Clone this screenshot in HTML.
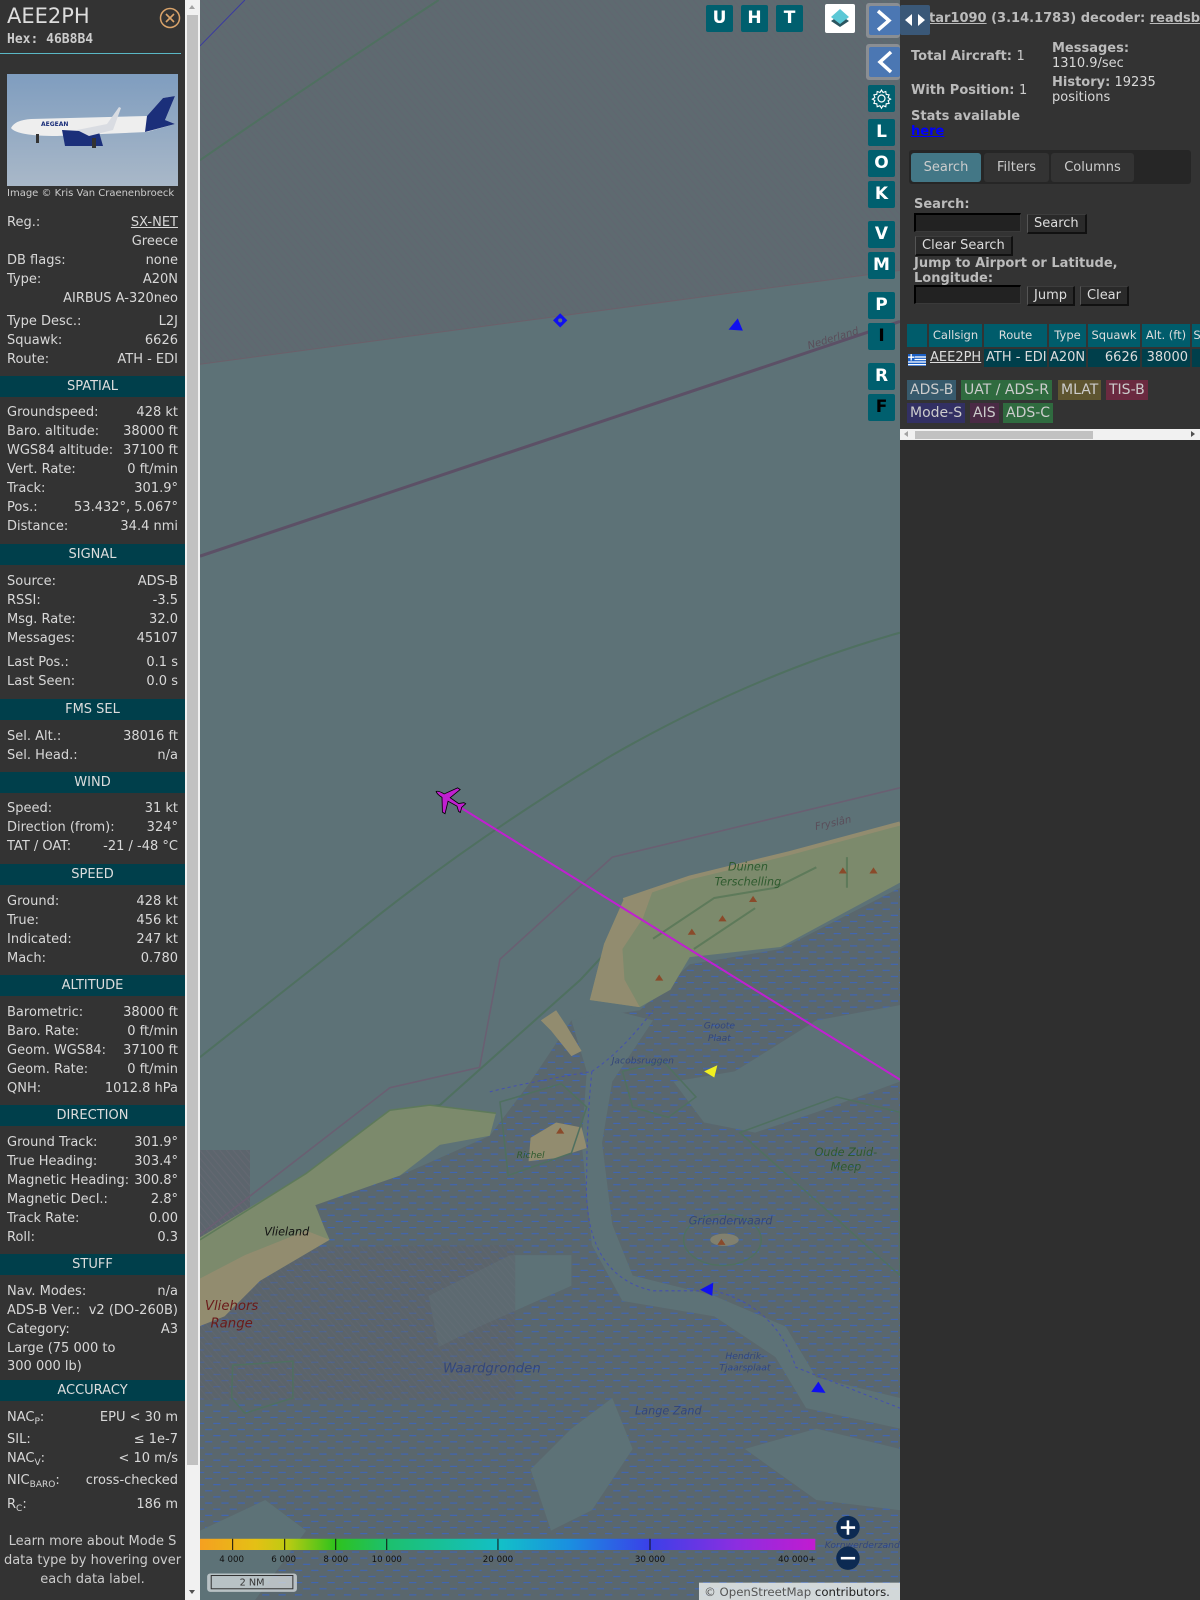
<!DOCTYPE html>
<html><head><meta charset="utf-8"><style>
*{box-sizing:border-box;margin:0;padding:0}
body{width:1200px;height:1600px;overflow:hidden;background:#333;font-family:"DejaVu Sans","Liberation Sans",sans-serif;color:#d8d8d8;position:relative}
#left{position:absolute;left:0;top:0;width:185px;height:1600px;background:#333}
.r{position:absolute;left:7px;width:171px;height:20px;line-height:20px;font-size:13px;white-space:nowrap}
.r .v{position:absolute;right:0;top:0}
.h{position:absolute;left:0;width:185px;height:21px;line-height:21px;background:#003f4b;text-align:center;font-size:13px;color:#ddd}
sub{font-size:9px;vertical-align:-3px}
#sb{position:absolute;left:185px;top:0;width:15px;height:1600px;background:#f1f1f1}
#map{position:absolute;left:200px;top:0;width:700px;height:1600px}
.mb{position:absolute;width:27px;height:27px;background:#005f6e;border-radius:2px;color:#fff;font-weight:bold;font-size:17px;text-align:center;line-height:27px;font-family:"DejaVu Sans",sans-serif}
#right{position:absolute;left:900px;top:0;width:300px;height:1600px;background:#2f2f2f}
.a{position:absolute;font-size:13px;white-space:nowrap}
.b{font-weight:bold;color:#bbb}
.btn{position:absolute;background:#2a2a2a;border:1px solid #555;border-right:2px solid #111;border-bottom:2px solid #111;border-top:1px solid #3d3d3d;color:#ddd;font-size:13px;line-height:17px;padding:0 6px}
.inp{position:absolute;background:#222;border-top:2px solid #000;border-left:2px solid #000;border-right:1px solid #3a3a3a;border-bottom:1px solid #3a3a3a}
.th{position:absolute;top:324px;height:23px;background:#005c6b;color:#ddd;font-size:11.5px;line-height:23px;text-align:center}
.td{position:absolute;top:349px;height:18px;background:#003f4b;color:#ddd;font-size:13px;line-height:18px}
.bd{position:absolute;height:20px;line-height:20px;font-size:14px;padding:0 3px;color:#ccc}
</style></head><body>
<div id="left">
<div style="position:absolute;left:7px;top:4px;font-size:21px;color:#ddd">AEE2PH</div>
<svg style="position:absolute;left:159px;top:7px" width="22" height="22"><circle cx="11" cy="11" r="9.5" fill="none" stroke="#d9a36a" stroke-width="1.5"/><path d="M7 7L15 15M15 7L7 15" stroke="#d9a36a" stroke-width="1.6"/></svg>
<div style="position:absolute;left:7px;top:32px;font-size:13px;font-weight:bold;font-family:'DejaVu Sans Mono',monospace;color:#ccc">Hex: 46B8B4</div>
<div style="position:absolute;left:0;top:53px;width:181px;height:1px;background:#5ab8c6"></div>
<svg style="position:absolute;left:7px;top:74px" width="171" height="112">
<defs><linearGradient id="sky" x1="0" y1="0" x2="0" y2="1"><stop offset="0" stop-color="#7f9dbf"/><stop offset="1" stop-color="#a9b8c8"/></linearGradient></defs>
<rect width="171" height="112" fill="url(#sky)"/>
<path d="M4 54 Q8 46 24 45 L140 42 L156 24 L168 22 L158 46 L168 50 L140 58 L50 62 Q10 62 4 54Z" fill="#eee"/>
<path d="M138 58 L140 42 L156 24 L168 22 L158 46 L168 50 Z" fill="#1b2f7a"/>
<path d="M55 56 L92 58 L96 72 L58 72 Z" fill="#1b2f7a"/><path d="M70 56 L100 50 L112 33 L114 34 L106 56 L82 62Z" fill="#d9dce2"/>
<rect x="85" y="64" width="4" height="10" fill="#333"/><rect x="29" y="60" width="3" height="9" fill="#333"/>
<text x="34" y="52" font-size="6" fill="#1b2f7a" font-weight="bold">AEGEAN</text>
</svg>
<div style="position:absolute;left:7px;top:188px;font-size:10px;color:#ccc;white-space:nowrap">Image © Kris Van Craenenbroeck</div>
<div class="r" style="top:213px">Reg.:<span class="v" style="text-decoration:underline">SX-NET</span></div>
<div class="r" style="top:232px"><span class="v">Greece</span></div>
<div class="r" style="top:251px">DB flags:<span class="v">none</span></div>
<div class="r" style="top:270px">Type:<span class="v">A20N</span></div>
<div class="r" style="top:289px"><span class="v">AIRBUS A-320neo</span></div>
<div class="r" style="top:312px">Type Desc.:<span class="v">L2J</span></div>
<div class="r" style="top:331px">Squawk:<span class="v">6626</span></div>
<div class="r" style="top:350px">Route:<span class="v">ATH - EDI</span></div>
<div class="h" style="top:376px">SPATIAL</div>
<div class="r" style="top:403px">Groundspeed:<span class="v">428 kt</span></div>
<div class="r" style="top:422px">Baro. altitude:<span class="v">38000 ft</span></div>
<div class="r" style="top:441px">WGS84 altitude:<span class="v">37100 ft</span></div>
<div class="r" style="top:460px">Vert. Rate:<span class="v">0 ft/min</span></div>
<div class="r" style="top:479px">Track:<span class="v">301.9°</span></div>
<div class="r" style="top:498px">Pos.:<span class="v">53.432°, 5.067°</span></div>
<div class="r" style="top:517px">Distance:<span class="v">34.4 nmi</span></div>
<div class="h" style="top:544px">SIGNAL</div>
<div class="r" style="top:572px">Source:<span class="v">ADS-B</span></div>
<div class="r" style="top:591px">RSSI:<span class="v">-3.5</span></div>
<div class="r" style="top:610px">Msg. Rate:<span class="v">32.0</span></div>
<div class="r" style="top:629px">Messages:<span class="v">45107</span></div>
<div class="r" style="top:653px">Last Pos.:<span class="v">0.1 s</span></div>
<div class="r" style="top:672px">Last Seen:<span class="v">0.0 s</span></div>
<div class="h" style="top:699px">FMS SEL</div>
<div class="r" style="top:727px">Sel. Alt.:<span class="v">38016 ft</span></div>
<div class="r" style="top:746px">Sel. Head.:<span class="v">n/a</span></div>
<div class="h" style="top:772px">WIND</div>
<div class="r" style="top:799px">Speed:<span class="v">31 kt</span></div>
<div class="r" style="top:818px">Direction (from):<span class="v">324°</span></div>
<div class="r" style="top:837px">TAT / OAT:<span class="v">-21 / -48 °C</span></div>
<div class="h" style="top:864px">SPEED</div>
<div class="r" style="top:892px">Ground:<span class="v">428 kt</span></div>
<div class="r" style="top:911px">True:<span class="v">456 kt</span></div>
<div class="r" style="top:930px">Indicated:<span class="v">247 kt</span></div>
<div class="r" style="top:949px">Mach:<span class="v">0.780</span></div>
<div class="h" style="top:975px">ALTITUDE</div>
<div class="r" style="top:1003px">Barometric:<span class="v">38000 ft</span></div>
<div class="r" style="top:1022px">Baro. Rate:<span class="v">0 ft/min</span></div>
<div class="r" style="top:1041px">Geom. WGS84:<span class="v">37100 ft</span></div>
<div class="r" style="top:1060px">Geom. Rate:<span class="v">0 ft/min</span></div>
<div class="r" style="top:1079px">QNH:<span class="v">1012.8 hPa</span></div>
<div class="h" style="top:1105px">DIRECTION</div>
<div class="r" style="top:1133px">Ground Track:<span class="v">301.9°</span></div>
<div class="r" style="top:1152px">True Heading:<span class="v">303.4°</span></div>
<div class="r" style="top:1171px">Magnetic Heading:<span class="v">300.8°</span></div>
<div class="r" style="top:1190px">Magnetic Decl.:<span class="v">2.8°</span></div>
<div class="r" style="top:1209px">Track Rate:<span class="v">0.00</span></div>
<div class="r" style="top:1228px">Roll:<span class="v">0.3</span></div>
<div class="h" style="top:1254px">STUFF</div>
<div class="r" style="top:1282px">Nav. Modes:<span class="v">n/a</span></div>
<div class="r" style="top:1301px">ADS-B Ver.:<span class="v">v2 (DO-260B)</span></div>
<div class="r" style="top:1320px">Category:<span class="v">A3</span></div>
<div class="r" style="top:1339px">Large (75 000 to</div>
<div class="r" style="top:1357px">300 000 lb)</div>
<div class="h" style="top:1380px">ACCURACY</div>
<div class="r" style="top:1408px">NAC<sub>P</sub>:<span class="v">EPU &lt; 30 m</span></div>
<div class="r" style="top:1430px">SIL:<span class="v">≤ 1e-7</span></div>
<div class="r" style="top:1449px">NAC<sub>V</sub>:<span class="v">&lt; 10 m/s</span></div>
<div class="r" style="top:1471px">NIC<sub>BARO</sub>:<span class="v">cross-checked</span></div>
<div class="r" style="top:1495px">R<sub>C</sub>:<span class="v">186 m</span></div>
<div style="position:absolute;left:0;top:1532px;width:185px;text-align:center;font-size:13px;line-height:19px;color:#ccc">Learn more about Mode S data type by hovering over each data label.</div>
</div>
<div id="sb"><div style="position:absolute;left:2px;top:15px;width:11px;height:1450px;background:#c1c1c1"></div>
<div style="position:absolute;left:4px;top:5px;width:0;height:0;border:3.5px solid transparent;border-bottom:4px solid #a3a3a3;border-top:0"></div>
<div style="position:absolute;left:4px;top:1590px;width:0;height:0;border:3.5px solid transparent;border-top:4px solid #505050;border-bottom:0"></div></div>

<svg id="map" viewBox="196 0 686 1568" preserveAspectRatio="none">
<defs>
<pattern id="hat" width="5" height="5" patternUnits="userSpaceOnUse" patternTransform="rotate(-40)"><rect width="5" height="5" fill="#5e6a70"/><line x1="0" y1="0" x2="0" y2="5" stroke="#616670" stroke-width="2"/></pattern>
<pattern id="hat2" width="5" height="5" patternUnits="userSpaceOnUse" patternTransform="rotate(-40)"><rect width="5" height="5" fill="#5c6069"/><line x1="0" y1="0" x2="0" y2="5" stroke="#666570" stroke-width="2"/></pattern>
<pattern id="flat" width="16" height="12" patternUnits="userSpaceOnUse"><rect width="16" height="12" fill="#5a676d"/><line x1="1" y1="3" x2="8" y2="3" stroke="#3c66be" stroke-width="1"/><line x1="9" y1="9" x2="16" y2="9" stroke="#3c66be" stroke-width="1"/></pattern>
<linearGradient id="cb" x1="0" x2="1"><stop offset="0" stop-color="#f5a020"/><stop offset=".09" stop-color="#e4c015"/><stop offset=".14" stop-color="#bfcb12"/><stop offset=".22" stop-color="#2ec21c"/><stop offset=".3" stop-color="#1dc06a"/><stop offset=".49" stop-color="#13bfc8"/><stop offset=".6" stop-color="#1a8fe0"/><stop offset=".73" stop-color="#3a40e8"/><stop offset=".87" stop-color="#8b2ee0"/><stop offset="1" stop-color="#c21bd0"/></linearGradient>
</defs>
<rect x="196" y="0" width="686" height="1568" fill="#5d7277"/>
<polygon points="196,0 882,0 882,265 196,357" fill="url(#hat)"/>
<line x1="196" y1="357" x2="882" y2="265" stroke="#6b606a" stroke-width="1"/>
<path d="M196,45 L240,0" stroke="#3a3aa0" stroke-width="1"/>
<polygon points="196,1300 255,1255 309,1181 392,1152 480,1113 520,1060 560,1000 627,990 676,945 765,930 882,870 882,1568 196,1568" fill="url(#flat)"/>
<g fill="#5d7277">
<polygon points="560,1000 600,990 640,1000 600,1060 590,1120 600,1200 620,1250 700,1270 770,1300 800,1350 882,1370 882,1400 790,1380 760,1330 700,1290 610,1275 580,1220 570,1120 575,1050"/>
<polygon points="660,1060 720,1050 800,1000 882,985 882,1060 800,1090 740,1110 690,1100"/>
<polygon points="420,1270 500,1230 560,1230 560,1260 470,1300 430,1320"/>
<polygon points="520,1440 560,1400 600,1370 620,1420 580,1480 540,1500"/>
<polygon points="730,1420 800,1400 882,1420 882,1480 800,1470"/>
<polygon points="196,1500 260,1470 300,1500 250,1568 196,1568"/>
</g>
<path d="M580,1050 Q575,1100 575,1150 Q570,1250 640,1265 L700,1265" fill="none" stroke="#4450b0" stroke-width="1" stroke-dasharray="3,3"/>
<path d="M480,1070 Q520,1060 580,1050 Q610,1030 640,990" fill="none" stroke="#4450b0" stroke-width="1" stroke-dasharray="3,3"/>
<path d="M700,1265 Q760,1280 780,1340 L882,1380" fill="none" stroke="#4450b0" stroke-width="1" stroke-dasharray="3,3"/>
<polygon points="192,1127 245,1127 245,1230 192,1230" fill="url(#hat2)" opacity=".75"/>
<polygon points="304,1222 505,1220 505,1372 196,1372 196,1300 255,1255" fill="url(#hat2)" opacity=".45"/>
<path d="M196,545 L882,315" stroke="#5c5066" stroke-width="3"/>
<path d="M196,157 Q300,85 430,0" stroke="#4f7060" stroke-width="2" fill="none"/>
<path d="M196,1036 L329,931 Q450,830 600,740 Q740,660 882,620" stroke="#4f7060" stroke-width="2" fill="none"/>
<path d="M380,1090 L431,1083 L569,960 L620,905" stroke="#4f7060" stroke-width="2" fill="none"/>
<path d="M196,1210 L382,1066 L470,1046 L490,940 L600,840 L882,772" stroke="#6a5f72" stroke-width="1.5" fill="none"/>
<polygon points="578,980 592,925 611,882 676,860 774,836 882,807 882,865 765,928 676,938 657,970 627,987" fill="#7c8a6c"/>
<polygon points="578,980 592,925 611,882 640,872 630,900 610,930 612,960 627,987" fill="#928c6f"/>
<path d="M611,882 L676,860 L774,836 L882,807" stroke="#928c6f" stroke-width="4" fill="none"/>
<path d="M640,920 L700,880 L760,870 L800,850 M680,930 L740,890 M830,840 L830,870" stroke="#5e7a5a" stroke-width="2" fill="none"/>
<polygon points="530,1000 545,990 555,1005 570,1030 560,1035 540,1010" fill="#928c6f"/>
<polygon points="192,1215 300,1150 382,1088 421,1083 486,1091 480,1113 431,1122 392,1152 309,1181 319,1206 323,1215 255,1255 192,1301" fill="#7c8a6c"/>
<polygon points="192,1255 240,1230 300,1206 323,1215 255,1255 220,1290 192,1301" fill="#928c6f"/>
<path d="M196,1215 L300,1150 L382,1088 L421,1083 L486,1091" stroke="#5e7a5a" stroke-width="1.5" fill="none"/>
<polygon points="520,1115 545,1100 570,1105 575,1125 545,1135 518,1138" fill="#928c6f"/>
<polygon points="490,1080 550,1062 575,1085 560,1130 498,1152" fill="none" stroke="#4f7060" stroke-width="1.5"/>
<polygon points="610,1050 650,1040 682,1075 655,1095 620,1085" fill="none" stroke="#4f7060" stroke-width="1.5"/>
<polygon points="725,1110 820,1075 882,1090 882,1250" fill="none" stroke="#4f7060" stroke-width="1.5"/>
<polygon points="228,1338 287,1334 287,1370 240,1385 227,1370" fill="none" stroke="#4f7060" stroke-width="1.5"/>
<ellipse cx="708" cy="1215" rx="38" ry="25" fill="none" stroke="#4f7060" stroke-width="1.5"/>
<ellipse cx="710" cy="1215" rx="14" ry="6" fill="#928c6f" opacity=".7"/>
<g fill="#8a4a2a"><polygon points="707,1214 711,1220 703,1220"/><polygon points="549,1105 553,1111 545,1111"/><polygon points="646,955 650,961 642,961"/><polygon points="678,910 682,916 674,916"/><polygon points="708,897 712,903 704,903"/><polygon points="738,878 742,884 734,884"/><polygon points="826,850 830,856 822,856"/><polygon points="856,850 860,856 852,856"/></g>
<path d="M441,785 L882,1058" stroke="#c020d0" stroke-width="2"/>
<g transform="translate(441,784) rotate(-58)" fill="#c020d0" stroke="#000" stroke-width=".8"><path d="M0,-16 Q2,-14 2,-8 L14,0 L14,3 L2,-1 L1.5,9 L5,13 L5,15 L0,13.5 L-5,15 L-5,13 L-1.5,9 L-2,-1 L-14,3 L-14,0 L-2,-8 Q-2,-14 0,-16Z"/></g>
<polygon points="549,307 556,314 549,321 542,314" fill="#1010f0"/><circle cx="549" cy="314" r="2" fill="#5e7479"/>
<polygon points="714,323 728,324 723,312" fill="#1010f0"/>
<polygon points="690,1050 703,1044 700,1056" fill="#f0f020"/>
<polygon points="686,1264 699,1257 698,1270" fill="#1010f0"/>
<polygon points="795,1364 809,1365 802,1354" fill="#1010f0"/>
<g font-family="DejaVu Sans,sans-serif" font-style="italic">
<text x="790" y="335" font-size="10" fill="#5a4e5a" transform="rotate(-17 815 330)">Nederland</text>
<text x="798" y="810" font-size="10" fill="#5a4e5a" transform="rotate(-12 815 805)">Fryslân</text>
<text x="733" y="853" font-size="11" fill="#2e5a2e" text-anchor="middle">Duinen</text>
<text x="733" y="868" font-size="11" fill="#2e5a2e" text-anchor="middle">Terschelling</text>
<text x="705" y="1008" font-size="9" fill="#33467a" text-anchor="middle">Groote</text>
<text x="705" y="1020" font-size="9" fill="#33467a" text-anchor="middle">Plaat</text>
<text x="630" y="1042" font-size="9" fill="#33467a" text-anchor="middle">Jacobsruggen</text>
<text x="520" y="1135" font-size="9" fill="#2e5a2e" text-anchor="middle">Richel</text>
<text x="829" y="1133" font-size="11" fill="#2e5a2e" text-anchor="middle">Oude Zuid-</text>
<text x="829" y="1147" font-size="11" fill="#2e5a2e" text-anchor="middle">Meep</text>
<text x="716" y="1200" font-size="11" fill="#33467a" text-anchor="middle">Grienderwaard</text>
<text x="281" y="1211" font-size="11" fill="#111" text-anchor="middle">Vlieland</text>
<text x="227" y="1284" font-size="13" fill="#6a1a1a" text-anchor="middle">Vliehors</text>
<text x="227" y="1301" font-size="13" fill="#6a1a1a" text-anchor="middle">Range</text>
<text x="482" y="1345" font-size="13" fill="#33467a" text-anchor="middle">Waardgronden</text>
<text x="655" y="1386" font-size="11" fill="#33467a" text-anchor="middle">Lange Zand</text>
<text x="730" y="1332" font-size="9" fill="#33467a" text-anchor="middle">Hendrik-</text>
<text x="730" y="1343" font-size="9" fill="#33467a" text-anchor="middle">Tjaarsplaat</text>
<text x="845" y="1517" font-size="9" fill="#33467a" text-anchor="middle">Kornwerderzand</text>
</g>
<rect x="196" y="1508" width="603" height="11" fill="url(#cb)"/>
<g stroke="#111" stroke-width="1"><line x1="228" y1="1508" x2="228" y2="1519"/><line x1="279" y1="1508" x2="279" y2="1519"/><line x1="329" y1="1508" x2="329" y2="1519"/><line x1="379" y1="1508" x2="379" y2="1519"/><line x1="488" y1="1508" x2="488" y2="1519"/><line x1="637" y1="1508" x2="637" y2="1519"/></g>
<g font-family="DejaVu Sans,sans-serif" font-size="8.5" fill="#111" text-anchor="middle"><text x="227" y="1531">4 000</text><text x="278" y="1531">6 000</text><text x="329" y="1531">8 000</text><text x="379" y="1531">10 000</text><text x="488" y="1531">20 000</text><text x="637" y="1531">30 000</text><text x="781" y="1531">40 000+</text></g>
<circle cx="831" cy="1497" r="11.5" fill="#0c2a52"/><path d="M831,1490V1504M824,1497H838" stroke="#fff" stroke-width="2.5"/>
<circle cx="831" cy="1527" r="11.5" fill="#0c2a52"/><path d="M824,1527H838" stroke="#fff" stroke-width="2.5"/>
<rect x="203" y="1542" width="88" height="18" rx="3" fill="#cfd6d8" opacity=".8"/>
<rect x="207" y="1544" width="80" height="13" fill="none" stroke="#333" stroke-width="1"/>
<text x="247" y="1554" font-family="DejaVu Sans,sans-serif" font-size="9.5" fill="#333" text-anchor="middle">2 NM</text>
<rect x="685" y="1551" width="197" height="17" fill="#e8ecec" opacity=".85"/>
<text x="690" y="1564" font-family="DejaVu Sans,sans-serif" font-size="11.5" fill="#555">© <tspan fill="#555">OpenStreetMap</tspan> <tspan fill="#222">contributors.</tspan></text>
</svg>

<div class="mb" style="left:706px;top:5px">U</div>
<div class="mb" style="left:741px;top:5px">H</div>
<div class="mb" style="left:776px;top:5px">T</div>
<div style="position:absolute;left:825px;top:4px;width:30px;height:29px;background:#fff;border-radius:2px"><svg width="30" height="29"><path d="M6,17 L15,23 L24,17 L15,11Z" fill="#2a5560"/><path d="M6,13 L15,5 L24,13 L15,20Z" fill="#5cc8d6"/></svg></div>
<div style="position:absolute;left:866px;top:3px;width:34px;height:35px;background:#8a8e93;border-radius:3px"><div style="position:absolute;left:3px;top:3px;width:31px;height:29px;background:#4b77b3;border-radius:2px"><svg width="31" height="29"><path d="M9,5 L20,14.5 L9,24" fill="none" stroke="#fff" stroke-width="3.5"/></svg></div></div>
<div style="position:absolute;left:866px;top:44px;width:34px;height:36px;background:#8a8e93;border-radius:3px"><div style="position:absolute;left:3px;top:3px;width:31px;height:30px;background:#4b77b3;border-radius:2px"><svg width="31" height="30"><path d="M22,5 L11,15 L22,25" fill="none" stroke="#fff" stroke-width="3.5"/></svg></div></div>
<div class="mb" style="left:868px;top:85px"><svg width="27" height="27"><circle cx="13.5" cy="13.5" r="3.5" fill="none" stroke="#fff" stroke-width="1.2"/><path d="M13.5,5 l1.5,2.5 2.8,-1 .4,2.9 2.9,.4 -1,2.8 2.5,1.5 -2.5,1.5 1,2.8 -2.9,.4 -.4,2.9 -2.8,-1 -1.5,2.5 -1.5,-2.5 -2.8,1 -.4,-2.9 -2.9,-.4 1,-2.8 -2.5,-1.5 2.5,-1.5 -1,-2.8 2.9,-.4 .4,-2.9 2.8,1z" fill="none" stroke="#fff" stroke-width="1.1"/></svg></div>
<div class="mb" style="left:868px;top:119px">L</div>
<div class="mb" style="left:868px;top:150px">O</div>
<div class="mb" style="left:868px;top:181px">K</div>
<div class="mb" style="left:868px;top:221px">V</div>
<div class="mb" style="left:868px;top:252px">M</div>
<div class="mb" style="left:868px;top:292px">P</div>
<div class="mb" style="left:868px;top:323px;color:#000">I</div>
<div class="mb" style="left:868px;top:363px">R</div>
<div class="mb" style="left:868px;top:394px;color:#000">F</div>

<div id="right">
<div style="position:absolute;left:0;top:0;width:300px;height:440px;background:#333"></div>
<div class="a b" style="left:29px;top:11px;font-size:13px;color:#bbb"><span style="text-decoration:underline">tar1090</span> (3.14.1783) decoder: <span style="text-decoration:underline">readsb</span></div>
<div style="position:absolute;left:0;top:5px;width:30px;height:30px;background:#3a5878;border-radius:2px"><svg width="30" height="30"><path d="M5,15 L12,9 L12,21Z M25,15 L18,9 L18,21Z" fill="#fff"/></svg></div>
<div class="a b" style="left:11px;top:49px">Total Aircraft: <span style="font-weight:normal;color:#ccc">1</span></div>
<div class="a b" style="left:11px;top:83px">With Position: <span style="font-weight:normal;color:#ccc">1</span></div>
<div class="a" style="left:152px;top:41px;line-height:15px"><span class="b">Messages:</span><br>1310.9/sec</div>
<div class="a" style="left:152px;top:75px;line-height:15px"><span class="b">History:</span> 19235<br>positions</div>
<div class="a b" style="left:11px;top:109px;line-height:15px">Stats available<br><span style="color:#00f;text-decoration:underline">here</span></div>
<div style="position:absolute;left:9px;top:150px;width:282px;height:34px;background:#262626;border-radius:3px"></div>
<div style="position:absolute;left:11px;top:153px;width:70px;height:29px;background:#437786;border-radius:3px;color:#ccc;font-size:13px;text-align:center;line-height:29px">Search</div>
<div style="position:absolute;left:84px;top:153px;width:65px;height:29px;background:#333;border-radius:3px;color:#ccc;font-size:13px;text-align:center;line-height:29px">Filters</div>
<div style="position:absolute;left:151px;top:153px;width:83px;height:29px;background:#333;border-radius:3px;color:#ccc;font-size:13px;text-align:center;line-height:29px">Columns</div>
<div class="a b" style="left:14px;top:197px">Search:</div>
<div class="inp" style="left:14px;top:213px;width:107px;height:19px"></div>
<div class="btn" style="left:127px;top:214px">Search</div>
<div class="btn" style="left:15px;top:236px">Clear Search</div>
<div class="a b" style="left:14px;top:256px;line-height:15px">Jump to Airport or Latitude,<br>Longitude:</div>
<div class="inp" style="left:14px;top:285px;width:107px;height:19px"></div>
<div class="btn" style="left:127px;top:286px">Jump</div>
<div class="btn" style="left:180px;top:286px">Clear</div>
<div class="th" style="left:7px;width:20px"></div>
<div class="th" style="left:29px;width:53px">Callsign</div>
<div class="th" style="left:84px;width:63px">Route</div>
<div class="th" style="left:149px;width:37px">Type</div>
<div class="th" style="left:188px;width:52px">Squawk</div>
<div class="th" style="left:242px;width:48px">Alt. (ft)</div>
<div class="th" style="left:292px;width:10px">S</div>
<div style="position:absolute;left:8px;top:351px"><svg width="18" height="12"><rect width="18" height="12" fill="#1b5fc4"/><g stroke="#fff" stroke-width="1.3"><line x1="0" y1="5.5" x2="18" y2="5.5"/><line x1="0" y1="8" x2="18" y2="8"/><line x1="0" y1="10.6" x2="18" y2="10.6"/><line x1="7" y1="3" x2="18" y2="3"/></g><rect x="0" y="0" width="6.5" height="6.5" fill="#1b5fc4"/><path d="M3.2,0V6.5M0,3.2H6.5" stroke="#fff" stroke-width="1.3"/></svg></div>
<div class="td" style="left:29px;width:53px;background:#333;text-decoration:underline;padding-left:1px">AEE2PH</div>
<div class="td" style="left:84px;width:63px;padding-left:2px">ATH - EDI</div>
<div class="td" style="left:149px;width:37px;padding-left:1px">A20N</div>
<div class="td" style="left:188px;width:52px;text-align:right;padding-right:2px">6626</div>
<div class="td" style="left:242px;width:48px;text-align:right;padding-right:2px">38000</div>
<div class="td" style="left:292px;width:10px"></div>
<div class="bd" style="left:7px;top:380px;background:#375a6c">ADS-B</div>
<div class="bd" style="left:61px;top:380px;background:#2f6b3f">UAT / ADS-R</div>
<div class="bd" style="left:158px;top:380px;background:#5e5530">MLAT</div>
<div class="bd" style="left:206px;top:380px;background:#6b2a40">TIS-B</div>
<div class="bd" style="left:7px;top:403px;background:#323063">Mode-S</div>
<div class="bd" style="left:70px;top:403px;background:#4a2a45">AIS</div>
<div class="bd" style="left:103px;top:403px;background:#2f6b3f">ADS-C</div>
<div style="position:absolute;left:0;top:429px;width:300px;height:11px;background:#f1f1f1"></div>
<div style="position:absolute;left:15px;top:431px;width:178px;height:8px;background:#c1c1c1"></div>
<div style="position:absolute;left:4px;top:431px;border:3.5px solid transparent;border-right:4px solid #a3a3a3;border-left:0"></div>
<div style="position:absolute;left:291px;top:431px;border:3.5px solid transparent;border-left:4px solid #505050;border-right:0"></div>
</div>
</body></html>
